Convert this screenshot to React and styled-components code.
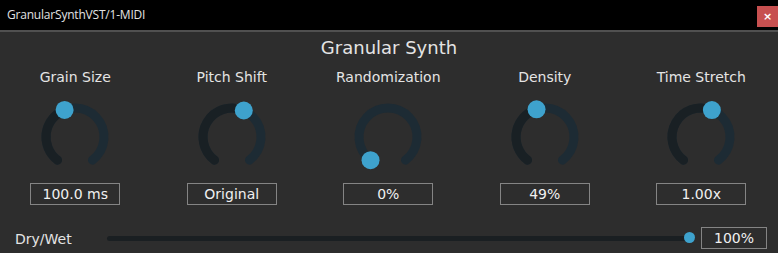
import React from "react";
import styled, { createGlobalStyle } from "styled-components";

const GlobalStyle = createGlobalStyle`
  html, body {
    margin: 0;
    padding: 0;
    background: #2d2d2d;
  }
`;

const Window = styled.div`
  width: 778px;
  height: 253px;
  background: #2d2d2d;
  font-family: "DejaVu Sans", Verdana, sans-serif;
  color: #e4e4e4;
  overflow: hidden;
`;

const TitleBar = styled.div`
  height: 30px;
  background: #000;
  border-bottom: 2px solid #505050;
  display: flex;
  align-items: flex-start;
  justify-content: space-between;
`;

const WindowName = styled.span`
  font-family: "Open Sans", "Noto Sans", sans-serif;
  font-size: 12px;
  line-height: 30px;
  color: #e2e2e2;
  padding-left: 7px;
  letter-spacing: -0.2px;
`;

const CloseButton = styled.div`
  width: 21px;
  height: 21px;
  margin-top: 6px;
  background: #c75050;
  color: #fff;
  font-family: "DejaVu Sans", sans-serif;
  font-size: 11px;
  font-weight: bold;
  display: flex;
  align-items: center;
  justify-content: center;
`;

const Title = styled.h1`
  margin: 0;
  padding-top: 5px;
  font-size: 18px;
  font-weight: normal;
  line-height: 22px;
  text-align: center;
`;

const KnobRow = styled.div`
  display: grid;
  grid-template-columns: repeat(5, 156.5px);
  margin-left: -3px;
  margin-top: 10px;
`;

const KnobCell = styled.div`
  display: flex;
  flex-direction: column;
  align-items: center;
`;

const Label = styled.div`
  font-size: 14px;
  line-height: 17px;
  white-space: nowrap;
`;

const KnobSvg = styled.svg`
  display: block;
  margin-top: 13px;
  margin-bottom: 8px;
`;

const ValueBox = styled.div`
  width: ${(p) => p.$width || 88}px;
  height: 20px;
  border: 1px solid #848484;
  font-size: 14px;
  line-height: 20px;
  text-align: center;
  color: #f0f0f0;
`;

const SliderRow = styled.div`
  display: flex;
  align-items: center;
  margin-top: 22px;
  padding: 0 11px 0 15px;
`;

const SliderLabel = styled.div`
  width: 92px;
  font-size: 14px;
  line-height: 17px;
  padding-top: 2px;
`;

const Slider = styled.div`
  position: relative;
  flex: 1;
  height: 12px;
  margin-right: 6px;
  display: flex;
  align-items: center;
`;

const Track = styled.div`
  flex: 1;
  height: 5px;
  border-radius: 3px;
  background: #1a1f22;
`;

const Thumb = styled.div`
  position: absolute;
  right: 0;
  top: 0;
  width: 11px;
  height: 11px;
  border-radius: 50%;
  background: #3ea2cd;
`;

const START = -143;
const END = 143;
const CX = 38;
const CY = 38;
const R = 29;

const pt = (deg) => {
  const a = (deg * Math.PI) / 180;
  return [CX + R * Math.sin(a), CY - R * Math.cos(a)];
};

const arc = (a, b) => {
  const [x1, y1] = pt(a);
  const [x2, y2] = pt(b);
  const large = b - a > 180 ? 1 : 0;
  return `M ${x1} ${y1} A ${R} ${R} 0 ${large} 1 ${x2} ${y2}`;
};

const Knob = ({ angle }) => {
  const [tx, ty] = pt(angle);
  return (
    <KnobSvg width="76" height="76" viewBox="0 0 76 76">
      <path d={arc(START, END)} stroke="#1d2b34" strokeWidth="9" fill="none" strokeLinecap="round" />
      {angle > START + 1 && (
        <path d={arc(START, angle)} stroke="#192024" strokeWidth="9" fill="none" strokeLinecap="round" />
      )}
      <circle cx={tx} cy={ty} r="9" fill="#3ea2cd" />
    </KnobSvg>
  );
};

const knobs = [
  { label: "Grain Size", value: "100.0 ms", angle: -21 },
  { label: "Pitch Shift", value: "Original", angle: 24 },
  { label: "Randomization", value: "0%", angle: -143 },
  { label: "Density", value: "49%", angle: -17 },
  { label: "Time Stretch", value: "1.00x", angle: 22 },
];

const App = () => {
  return (
    <Window>
      <GlobalStyle />
      <TitleBar>
        <WindowName>GranularSynthVST/1-MIDI</WindowName>
        <CloseButton>×</CloseButton>
      </TitleBar>
      <Title>Granular Synth</Title>
      <KnobRow>
        {knobs.map((k) => (
          <KnobCell key={k.label}>
            <Label>{k.label}</Label>
            <Knob angle={k.angle} />
            <ValueBox>{k.value}</ValueBox>
          </KnobCell>
        ))}
      </KnobRow>
      <SliderRow>
        <SliderLabel>Dry/Wet</SliderLabel>
        <Slider>
          <Track />
          <Thumb />
        </Slider>
        <ValueBox $width={64}>100%</ValueBox>
      </SliderRow>
    </Window>
  );
};

export default App;
